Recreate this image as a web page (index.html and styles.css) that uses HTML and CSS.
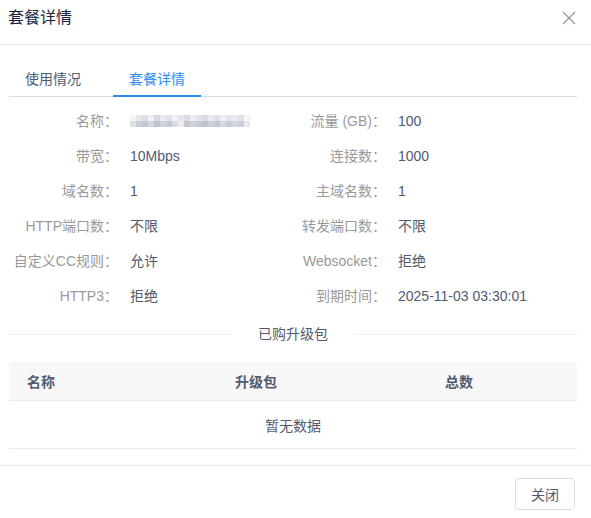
FILE: index.html
```html
<!DOCTYPE html>
<html lang="zh-CN">
<head>
<meta charset="utf-8">
<title>套餐详情</title>
<link rel="stylesheet" href="styles.css">
</head>
<body>
<div class="modal">
  <div class="modal-header">
    <div class="modal-title">套餐详情</div>
    <span class="modal-close">
      <svg width="14" height="14" viewBox="0 0 14 14"><path d="M1 1L13 13M13 1L1 13" stroke="#999" stroke-width="1.2" fill="none"/></svg>
    </span>
  </div>
  <div class="modal-body">
    <div class="tabs">
      <div class="tab">使用情况</div>
      <div class="tab active">套餐详情</div>
    </div>
    <div class="info">
      <div class="label">名称：</div>
      <div class="value"><span class="mosaic"></span></div>
      <div class="label">流量 (GB)：</div>
      <div class="value">100</div>

      <div class="label">带宽：</div>
      <div class="value">10Mbps</div>
      <div class="label">连接数：</div>
      <div class="value">1000</div>

      <div class="label">域名数：</div>
      <div class="value">1</div>
      <div class="label">主域名数：</div>
      <div class="value">1</div>

      <div class="label">HTTP端口数：</div>
      <div class="value">不限</div>
      <div class="label">转发端口数：</div>
      <div class="value">不限</div>

      <div class="label">自定义CC规则：</div>
      <div class="value">允许</div>
      <div class="label">Websocket：</div>
      <div class="value">拒绝</div>

      <div class="label">HTTP3：</div>
      <div class="value">拒绝</div>
      <div class="label">到期时间：</div>
      <div class="value">2025-11-03 03:30:01</div>
    </div>
    <div class="divider"><span class="divider-text">已购升级包</span></div>
    <div class="table">
      <div class="thead">
        <div class="th c1">名称</div>
        <div class="th c2">升级包</div>
        <div class="th c3">总数</div>
      </div>
      <div class="empty">暂无数据</div>
    </div>
  </div>
  <div class="modal-footer">
    <button class="btn">关闭</button>
  </div>
</div>
</body>
</html>
```
FILE: styles.css
```css
* { box-sizing: border-box; }
html, body { margin: 0; padding: 0; background: #fff; }
body {
  font-family: "Liberation Sans", "Noto Sans CJK SC", sans-serif;
  font-size: 14px;
  color: #515a6e;
}
.modal { width: 591px; }
.modal-header {
  height: 45px;
  border-bottom: 1px solid #e8eaec;
  display: flex;
  align-items: center;
  justify-content: space-between;
  padding: 0 15px 1px 8px;
}
.modal-title { font-size: 16px; color: #17233d; line-height: 20px; margin-top: -8px; }
.modal-close { display: flex; width: 14px; height: 14px; margin-top: -7px; }
.modal-body { padding: 0 14px 0 9px; }
.tabs {
  margin-top: 16px;
  display: flex;
  border-bottom: 1px solid #dcdee2;
}
.tab {
  position: relative;
  padding: 8px 16px 7px;
  line-height: 20px;
  margin-right: 16px;
  color: #515a6e;
}
.tab.active { color: #2d8cf0; }
.tab.active::after {
  content: "";
  position: absolute;
  left: 0; right: 0; bottom: -1px;
  height: 2px;
  background: #2d8cf0;
}
.info {
  margin-top: 7px;
  display: grid;
  grid-template-columns: 121px 148px 120px 1fr;
  grid-auto-rows: 35px;
  line-height: 35px;
}
.label { text-align: right; padding-right: 12px; color: #999; white-space: nowrap; }
.value { color: #515a6e; white-space: nowrap; }
.mosaic {
  display: inline-block;
  vertical-align: middle;
  width: 120px;
  height: 12px;
  margin-top: -3px;
  background:
    linear-gradient(90deg, #f4f5f8 0 6px, #e6e8ee 6px 12px, #dcdfe6 12px 18px, #eef0f4 18px 24px, #d6d9e1 24px 30px, #e9ebf0 30px 36px, #dfe2e8 36px 42px, #f1f2f5 42px 48px, #e3e5eb 48px 54px, #d9dce4 54px 60px, #eceef2 60px 66px, #e0e3e9 66px 72px, #d8dbe3 72px 78px, #e8eaef 78px 84px, #dee1e7 84px 90px, #eff0f4 90px 96px, #e1e4ea 96px 102px, #e9ebf0 102px 108px, #dfe2e8 108px 114px, #f3f4f7 114px 120px) top / 120px 6px no-repeat,
    linear-gradient(90deg, #dcdfe6 0 6px, #c9cdd7 6px 12px, #c4c8d2 12px 18px, #d3d6de 18px 24px, #bfc3ce 24px 30px, #cfd2da 30px 36px, #c6cad4 36px 42px, #d9dce3 42px 48px, #eceef2 48px 54px, #c3c7d1 54px 60px, #d0d3db 60px 66px, #c5c9d3 66px 72px, #bcc1cc 72px 78px, #cdd0d9 78px 84px, #c4c8d2 84px 90px, #d6d9e0 90px 96px, #c8ccd5 96px 102px, #d1d4dc 102px 108px, #cbced7 108px 114px, #e7e9ee 114px 120px) bottom / 120px 6px no-repeat;
}
.divider {
  margin-top: 10px;
  height: 21px;
  display: flex;
  align-items: center;
  gap: 26px;
}
.divider::before, .divider::after {
  content: "";
  flex: 1;
  height: 1px;
  background: #eeeff2;
}
.divider-text { line-height: 21px; color: #515a6e; }
.table { margin-top: 17px; }
.thead {
  display: flex;
  height: 39px;
  background: #f8f8f9;
  border-bottom: 1px solid #e8eaec;
  align-items: center;
}
.th { font-weight: bold; padding-left: 18px; color: #515a6e; }
.c1 { width: 208px; }
.c2 { width: 210px; }
.c3 { flex: 1; }
.empty {
  height: 48px;
  border-bottom: 1px solid #e8eaec;
  display: flex;
  align-items: center;
  justify-content: center;
  color: #515a6e;
}
.modal-footer {
  margin-top: 16px;
  border-top: 1px solid #e8eaec;
  padding: 12px 16px 0;
  display: flex;
  justify-content: flex-end;
}
.btn {
  width: 60px;
  height: 32px;
  border: 1px solid #dcdee2;
  border-radius: 4px;
  background: #fff;
  font-family: inherit;
  font-size: 14px;
  color: #515a6e;
  padding: 0;
}
```
